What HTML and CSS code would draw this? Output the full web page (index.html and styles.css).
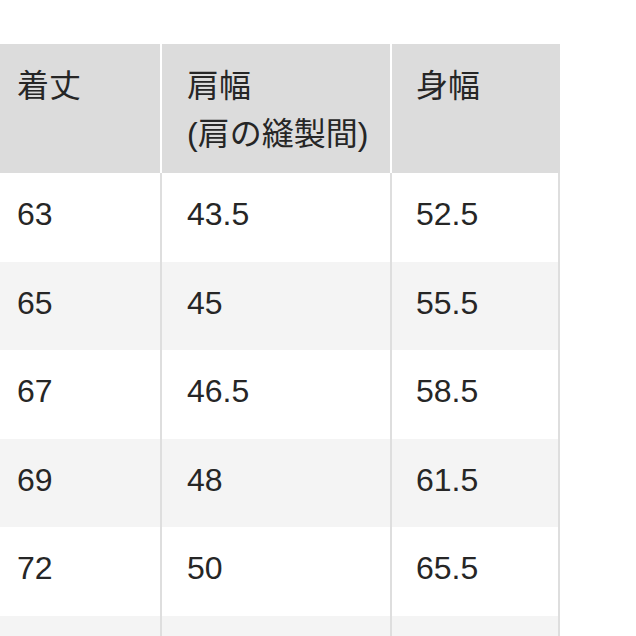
FILE: index.html
```html
<!DOCTYPE html>
<html lang="ja">
<head>
<meta charset="utf-8">
<link rel="stylesheet" href="styles.css">
</head>
<body>
<div class="table">
  <div class="cell head c1">着丈</div>
  <div class="cell head c2">肩幅<br>(肩の縫製間)</div>
  <div class="cell head c3">身幅</div>

  <div class="cell c1">63</div><div class="cell c2">43.5</div><div class="cell c3">52.5</div>
  <div class="cell alt c1">65</div><div class="cell alt c2">45</div><div class="cell alt c3">55.5</div>
  <div class="cell c1">67</div><div class="cell c2">46.5</div><div class="cell c3">58.5</div>
  <div class="cell alt c1">69</div><div class="cell alt c2">48</div><div class="cell alt c3">61.5</div>
  <div class="cell c1">72</div><div class="cell c2">50</div><div class="cell c3">65.5</div>
  <div class="cell alt stub"></div><div class="cell alt stub"></div><div class="cell alt stub"></div>
</div>
</body>
</html>
```
FILE: styles.css
```css
html, body {
  margin: 0;
  padding: 0;
  background: #ffffff;
  overflow: hidden;
}
body {
  padding-top: 44px;
  font-family: "Liberation Sans", "Noto Sans CJK JP", sans-serif;
  color: #262626;
  font-size: 32px;
}
.table {
  display: grid;
  grid-template-columns: 162px 230px 168px;
  grid-template-rows: 129px repeat(5, 88.6px) 20px;
  width: 560px;
}
.cell {
  box-sizing: border-box;
  border-right: 2px solid #dedede;
  background: #ffffff;
  line-height: 40px;
  padding-top: 21px;
}
.cell.alt {
  background: #f4f4f4;
}
.cell.stub {
  padding-top: 0;
}
.cell.head {
  background: #dcdcdc;
  border-right: 2px solid #ffffff;
  line-height: 48px;
  padding-top: 18px;
}
.table > .cell.head:nth-child(3) {
  border-right-color: #dcdcdc;
}
.c1 { padding-left: 17px; }
.c2 { padding-left: 25px; }
.c3 { padding-left: 24px; }
```
